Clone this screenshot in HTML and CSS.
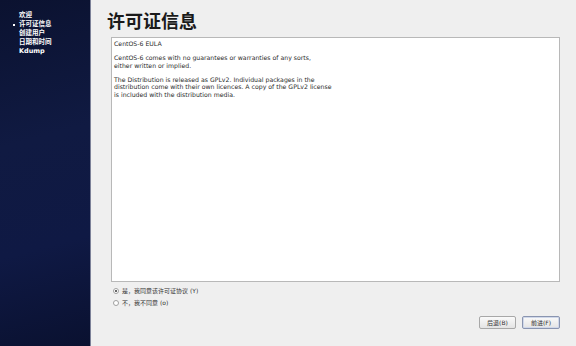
FILE: index.html
```html
<!DOCTYPE html>
<html lang="zh-CN">
<head>
  <meta charset="UTF-8">
  <title>许可证信息</title>
  <link rel="stylesheet" href="styles.css">
</head>
<body>
  <div class="sidebar">
    <ul class="steps">
      <li>欢迎</li>
      <li class="current">许可证信息</li>
      <li>创建用户</li>
      <li>日期和时间</li>
      <li>Kdump</li>
    </ul>
  </div>
  <div class="main">
    <h1>许可证信息</h1>
    <div class="license">
      <p>CentOS-6 EULA</p>
      <p>CentOS-6 comes with no guarantees or warranties of any sorts,<br>either written or implied.</p>
      <p>The Distribution is released as GPLv2. Individual packages in the<br>distribution come with their own licences. A copy of the GPLv2 license<br>is included with the distribution media.</p>
    </div>
    <div class="choices">
      <label class="choice"><span class="radio checked"></span>是，我同意该许可证协议 (Y)</label>
      <label class="choice"><span class="radio"></span>不，我不同意 (o)</label>
    </div>
    <div class="buttons">
      <button>后退(B)</button>
      <button class="active">前进(F)</button>
    </div>
  </div>
</body>
</html>
```
FILE: styles.css
```css
html, body {
  margin: 0;
  height: 100%;
}
body {
  display: flex;
  background-color: #efefef;
  font-family: "DejaVu Sans", "Noto Sans CJK SC", sans-serif;
  overflow: hidden;
}
.sidebar {
  width: 90px;
  flex: none;
  background: linear-gradient(165deg, #0b1230 0%, #101a42 40%, #0f1944 70%, #0a1130 100%);
  border-right: 1px solid #7c8198;
}
.steps {
  list-style: none;
  margin: 0;
  padding: 11px 0 0 19px;
}
.steps li {
  color: #ffffff;
  font-size: 6.5px;
  font-weight: bold;
  height: 9px;
  line-height: 9px;
  position: relative;
}
.steps li.current::before {
  content: "";
  position: absolute;
  left: -6px;
  top: 4px;
  width: 2px;
  height: 2px;
  background: #ffffff;
}
.main {
  flex: 1;
  display: flex;
  flex-direction: column;
  padding: 0 16px 0 16px;
}
h1 {
  margin: 9px 0 0 0;
  font-size: 18px;
  line-height: 22px;
  font-weight: bold;
  color: #1a1a1a;
  font-family: "Noto Sans CJK SC", sans-serif;
}
.license {
  margin: 6px 0 0 4px;
  height: 239px;
  background: #ffffff;
  border: 1px solid #b8b8b8;
  padding: 2px 2px;
  font-size: 6.2px;
  line-height: 7.6px;
  color: #2a2a2a;
}
.license p {
  margin: 0 0 6.5px 0;
}
.choices {
  margin: 4px 0 0 6px;
  display: flex;
  flex-direction: column;
  gap: 3px;
}
.choice {
  display: flex;
  align-items: center;
  font-size: 6px;
  line-height: 9px;
  color: #333333;
}
.radio {
  width: 4px;
  height: 4px;
  border: 1px solid #a0a0a0;
  border-radius: 50%;
  background: #ffffff;
  margin-right: 3px;
  position: relative;
}
.radio.checked::after {
  content: "";
  position: absolute;
  left: 1px;
  top: 1px;
  width: 2px;
  height: 2px;
  border-radius: 50%;
  background: #333333;
}
.buttons {
  display: flex;
  justify-content: flex-end;
  gap: 6px;
  margin-top: 9px;
}
.buttons button {
  font-family: inherit;
  font-size: 6px;
  width: 37px;
  height: 13px;
  padding: 0;
  color: #333333;
  background: linear-gradient(#fafafa, #e4e4e4);
  border: 1px solid #a8a8a8;
  border-radius: 2px;
}
.buttons button.active {
  width: 38px;
  border-color: #8a95b0;
  box-shadow: inset 0 0 0 1px #d0d8ea;
}
```
